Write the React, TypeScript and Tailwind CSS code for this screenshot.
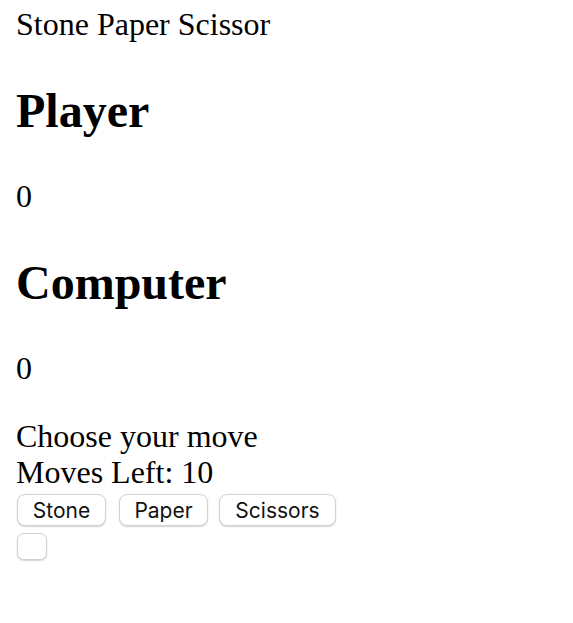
import React from "react";

const btn =
  "h-[32px] rounded-[8px] border border-[#d2d2d2] bg-white shadow-[0_1px_1.5px_rgba(0,0,0,0.18)] text-[21px] text-[#111] flex items-center justify-center pt-[2px]";

export default function App() {
  return (
    <div
      className="px-4 text-black bg-white min-h-[623px]"
      style={{ fontFamily: '"Liberation Serif", "Times New Roman", serif' }}
    >
      <div className="pt-[6px] text-[32px] leading-[36px]">Stone Paper Scissor</div>
      <h1 className="mt-[41px] text-[48px] leading-[55px] font-bold">Player</h1>
      <p className="mt-[40px] text-[32px] leading-[36px]">0</p>
      <h1 className="mt-[41px] text-[48px] leading-[55px] font-bold">Computer</h1>
      <p className="mt-[40px] text-[32px] leading-[36px]">0</p>
      <div className="mt-[32px] text-[32px] leading-[36px]">Choose your move</div>
      <div className="text-[32px] leading-[36px]">Moves Left: 10</div>
      <div
        className="mt-[4px] flex pl-[1px]"
        style={{ fontFamily: 'Inter, "Liberation Sans", sans-serif' }}
      >
        <button className={`${btn} w-[89px]`}>Stone</button>
        <button className={`${btn} w-[89px] ml-[13px]`}>Paper</button>
        <button className={`${btn} w-[117px] ml-[11px]`}>Scissors</button>
      </div>
      <div className="mt-[7px] pl-[1px]">
        <button className="block w-[30px] h-[27px] rounded-[7px] border border-[#d2d2d2] bg-white shadow-[0_1px_1.5px_rgba(0,0,0,0.18)]"></button>
      </div>
    </div>
  );
}
